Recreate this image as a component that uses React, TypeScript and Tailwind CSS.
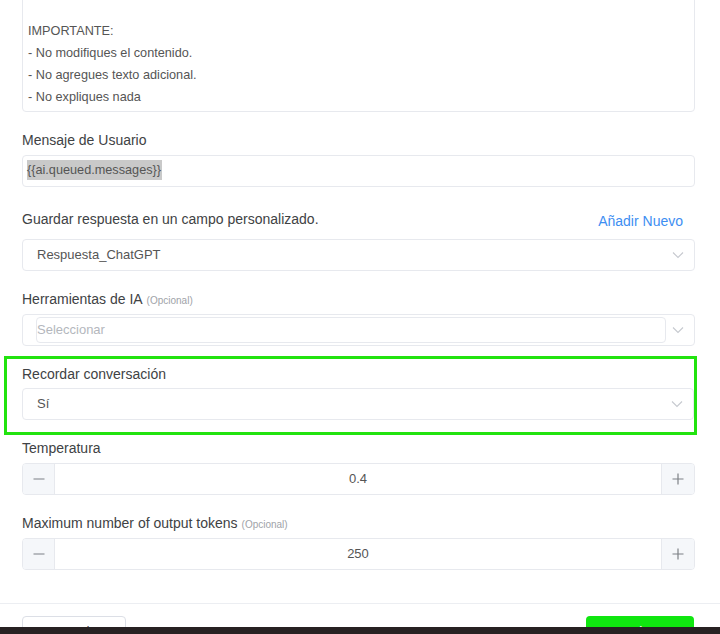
import React from 'react';

const Chevron = () => (
  <svg width="12" height="8" viewBox="0 0 12 8" fill="none" className="shrink-0">
    <path d="M1 1.5l5 5 5-5" stroke="#c6c9cf" strokeWidth="1.1" />
  </svg>
);

const Label = ({ children, optional }: { children: React.ReactNode; optional?: boolean }) => (
  <div className="h-5 leading-5 text-[14px] text-[#404244]">
    {children}
    {optional && <span className="ml-1 text-[10px] text-[#a0a3a8]">(Opcional)</span>}
  </div>
);

const SelectBox = ({ value }: { value: string }) => (
  <div className="h-8 flex items-center justify-between border border-[#e7e9ee] rounded bg-white pl-[14px] pr-[10px]">
    <span className="text-[13px] text-[#555]">{value}</span>
    <Chevron />
  </div>
);

const NumberBox = ({ value }: { value: string }) => (
  <div className="h-8 flex border border-[#e7e9ee] rounded bg-white overflow-hidden">
    <button className="w-[32px] bg-[#f5f7fa] border-r border-[#e7e9ee] flex items-center justify-center">
      <svg width="12" height="12" viewBox="0 0 12 12"><path d="M0.5 6h11" stroke="#7d8085" strokeWidth="1.2" /></svg>
    </button>
    <div className="flex-1 flex items-center justify-center text-[13px] text-[#555]">{value}</div>
    <button className="w-[33px] bg-[#f5f7fa] border-l border-[#e7e9ee] flex items-center justify-center">
      <svg width="12" height="12" viewBox="0 0 12 12"><path d="M0.5 6h11M6 0.5v11" stroke="#7d8085" strokeWidth="1.2" /></svg>
    </button>
  </div>
);

const App = () => {
  const lines = ['', 'IMPORTANTE:', '- No modifiques el contenido.', '- No agregues texto adicional.', '- No expliques nada'];
  return (
    <div className="relative w-[720px] h-[634px] overflow-hidden bg-white font-['Liberation_Sans',Arial,sans-serif]">
      <div className="pl-[22px] pr-[25px]">
        <div className="-mt-[8px] border border-[#e7e9ee] rounded pt-[5px] pb-[3px] pl-[5px]">
          {lines.map((l, i) => (
            <div key={i} className="h-[22px] leading-[22px] text-[12.7px] text-[#555]">{l}</div>
          ))}
        </div>

        <div className="mt-[18px]">
          <Label>Mensaje de Usuario</Label>
          <div className="mt-[5px] h-8 border border-[#e7e9ee] rounded bg-white pl-[4px] pt-[1px]">
            <span className="inline-block h-5 leading-5 bg-[#c9c9c9] text-[12.7px] text-[#555] pr-[1px]">{'{{ai.queued.messages}}'}</span>
          </div>
        </div>

        <div className="mt-[22px]">
          <div className="flex items-center justify-between h-5">
            <Label>Guardar respuesta en un campo personalizado.</Label>
            <span className="text-[14px] text-[#3d8ef2] mr-[12px] mt-[4px]">Añadir Nuevo</span>
          </div>
          <div className="mt-[10px]">
            <SelectBox value="Respuesta_ChatGPT" />
          </div>
        </div>

        <div className="mt-[18px]">
          <Label optional>Herramientas de IA</Label>
          <div className="mt-[5px] h-8 flex items-center border border-[#e7e9ee] rounded bg-white pl-[13px] pr-[10px]">
            <div className="flex-1 h-[26px] flex items-center border border-[#e7e9ee] rounded mr-[6px]">
              <span className="text-[13px] text-[#b4b7bd]">Seleccionar</span>
            </div>
            <Chevron />
          </div>
        </div>

        <div className="mt-[10px] -ml-[18px] -mr-[2px] border-[3px] border-[#22e30f] pl-[15px] pt-[5px] pb-[12px]">
          <Label>Recordar conversación</Label>
          <div className="mt-[4px]">
            <SelectBox value="Sí" />
          </div>
        </div>

        <div className="mt-[3px]">
          <Label>Temperatura</Label>
          <div className="mt-[5px]">
            <NumberBox value="0.4" />
          </div>
        </div>

        <div className="mt-[18px]">
          <Label optional>Maximum number of output tokens</Label>
          <div className="mt-[5px]">
            <NumberBox value="250" />
          </div>
        </div>
      </div>

      <div className="mt-[33px] border-t border-[#eceef2]" />

      <div className="flex justify-between pl-[22px] pr-[26px] pt-[12px]">
        <button className="w-[104px] h-[32px] border border-[#dcdfe6] rounded text-[14px] text-[#555]">Cancelar</button>
        <button className="w-[108px] h-[32px] rounded bg-[#10e610] text-[14px] text-white">Continuar</button>
      </div>

      <div className="absolute left-0 right-0 bottom-0 h-[7px] bg-[#272122]" />
    </div>
  );
};

export default App;
